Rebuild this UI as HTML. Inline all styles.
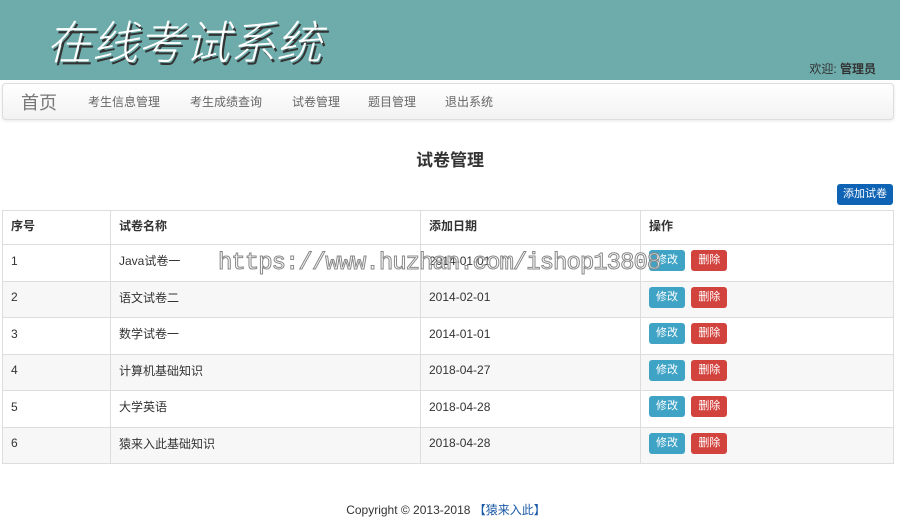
<!DOCTYPE html>
<html><head><meta charset="utf-8"><style>
body{margin:0;width:900px;height:531px;background:#fff;font-family:"Liberation Sans","Noto Sans CJK SC",sans-serif;font-size:12px;color:#333;position:relative;overflow:hidden}
.hd{position:absolute;left:0;top:0;width:900px;height:80px;background:#6eabab}
.title{position:absolute;left:46px;top:10px;font-size:46px;font-style:italic;font-weight:300;color:#fff;text-shadow:2px 3px 0 #333;letter-spacing:0;font-family:"Noto Sans CJK SC",sans-serif;line-height:60px}
.wel{position:absolute;right:24px;top:60px;font-size:12px;color:#333}
.nav{position:absolute;left:2px;top:83px;width:890px;height:35px;border:1px solid #ddd;border-radius:4px;background:linear-gradient(#fff,#f2f2f2);box-shadow:0 1px 3px rgba(0,0,0,.1)}
.nav span{position:absolute;top:9px;font-size:12px;color:#666}
.nav .home{font-size:18px;top:5px;color:#777}
h3{position:absolute;left:0;width:900px;top:146px;margin:0;text-align:center;font-size:17px;font-weight:bold;color:#333}
.add{position:absolute;left:837px;top:184px;width:56px;height:21px;background:#0f63b5;border-radius:3px;color:#fff;font-size:11px;line-height:21px;text-align:center}
table{position:absolute;left:2px;top:210px;width:892px;border-collapse:collapse;border:1px solid #ddd}
td,th{border:1px solid #ddd;height:31.5px;padding:0 8px 4px;text-align:left;font-size:12px;vertical-align:middle}
th{height:29px;font-weight:bold}
tr:nth-child(odd) td{background:#f7f7f7}
.b{display:inline-block;width:36px;height:21px;line-height:21px;border-radius:3px;color:#fff;font-size:11px;text-align:center;margin-right:3px;vertical-align:middle}
.e{background:#3fa3c6}.d{background:#d2433e}
.ft{position:absolute;top:501px;left:-4px;width:900px;text-align:center;font-size:12px}
.ft b{color:#1a5aa6;font-weight:normal}
.wm{position:absolute;left:218px;top:250px;font-family:"Liberation Mono",monospace;font-size:24px;color:rgba(255,255,255,.6);-webkit-text-stroke:1px #888;letter-spacing:-1px}
</style></head><body>
<div class="hd"><div class="title">在线考试系统</div><div class="wel">欢迎: <b>管理员</b></div></div>
<div class="nav"><span class="home" style="left:18px">首页</span><span style="left:85px">考生信息管理</span><span style="left:187px">考生成绩查询</span><span style="left:289px">试卷管理</span><span style="left:365px">题目管理</span><span style="left:442px">退出系统</span></div>
<h3>试卷管理</h3>
<div class="add">添加试卷</div>
<table>
<tr><th style="width:91px">序号</th><th style="width:293px">试卷名称</th><th style="width:203px">添加日期</th><th>操作</th></tr>
<tr><td>1</td><td>Java试卷一</td><td>2014-01-01</td><td><span class="b e">修改</span> <span class="b d">删除</span></td></tr>
<tr><td>2</td><td>语文试卷二</td><td>2014-02-01</td><td><span class="b e">修改</span> <span class="b d">删除</span></td></tr>
<tr><td>3</td><td>数学试卷一</td><td>2014-01-01</td><td><span class="b e">修改</span> <span class="b d">删除</span></td></tr>
<tr><td>4</td><td>计算机基础知识</td><td>2018-04-27</td><td><span class="b e">修改</span> <span class="b d">删除</span></td></tr>
<tr><td>5</td><td>大学英语</td><td>2018-04-28</td><td><span class="b e">修改</span> <span class="b d">删除</span></td></tr>
<tr><td>6</td><td>猿来入此基础知识</td><td>2018-04-28</td><td><span class="b e">修改</span> <span class="b d">删除</span></td></tr>
</table>
<div class="wm">https://www.huzhan.com/ishop13808</div>
<div class="ft">Copyright © 2013-2018 <b>【猿来入此】</b></div>
</body></html>
